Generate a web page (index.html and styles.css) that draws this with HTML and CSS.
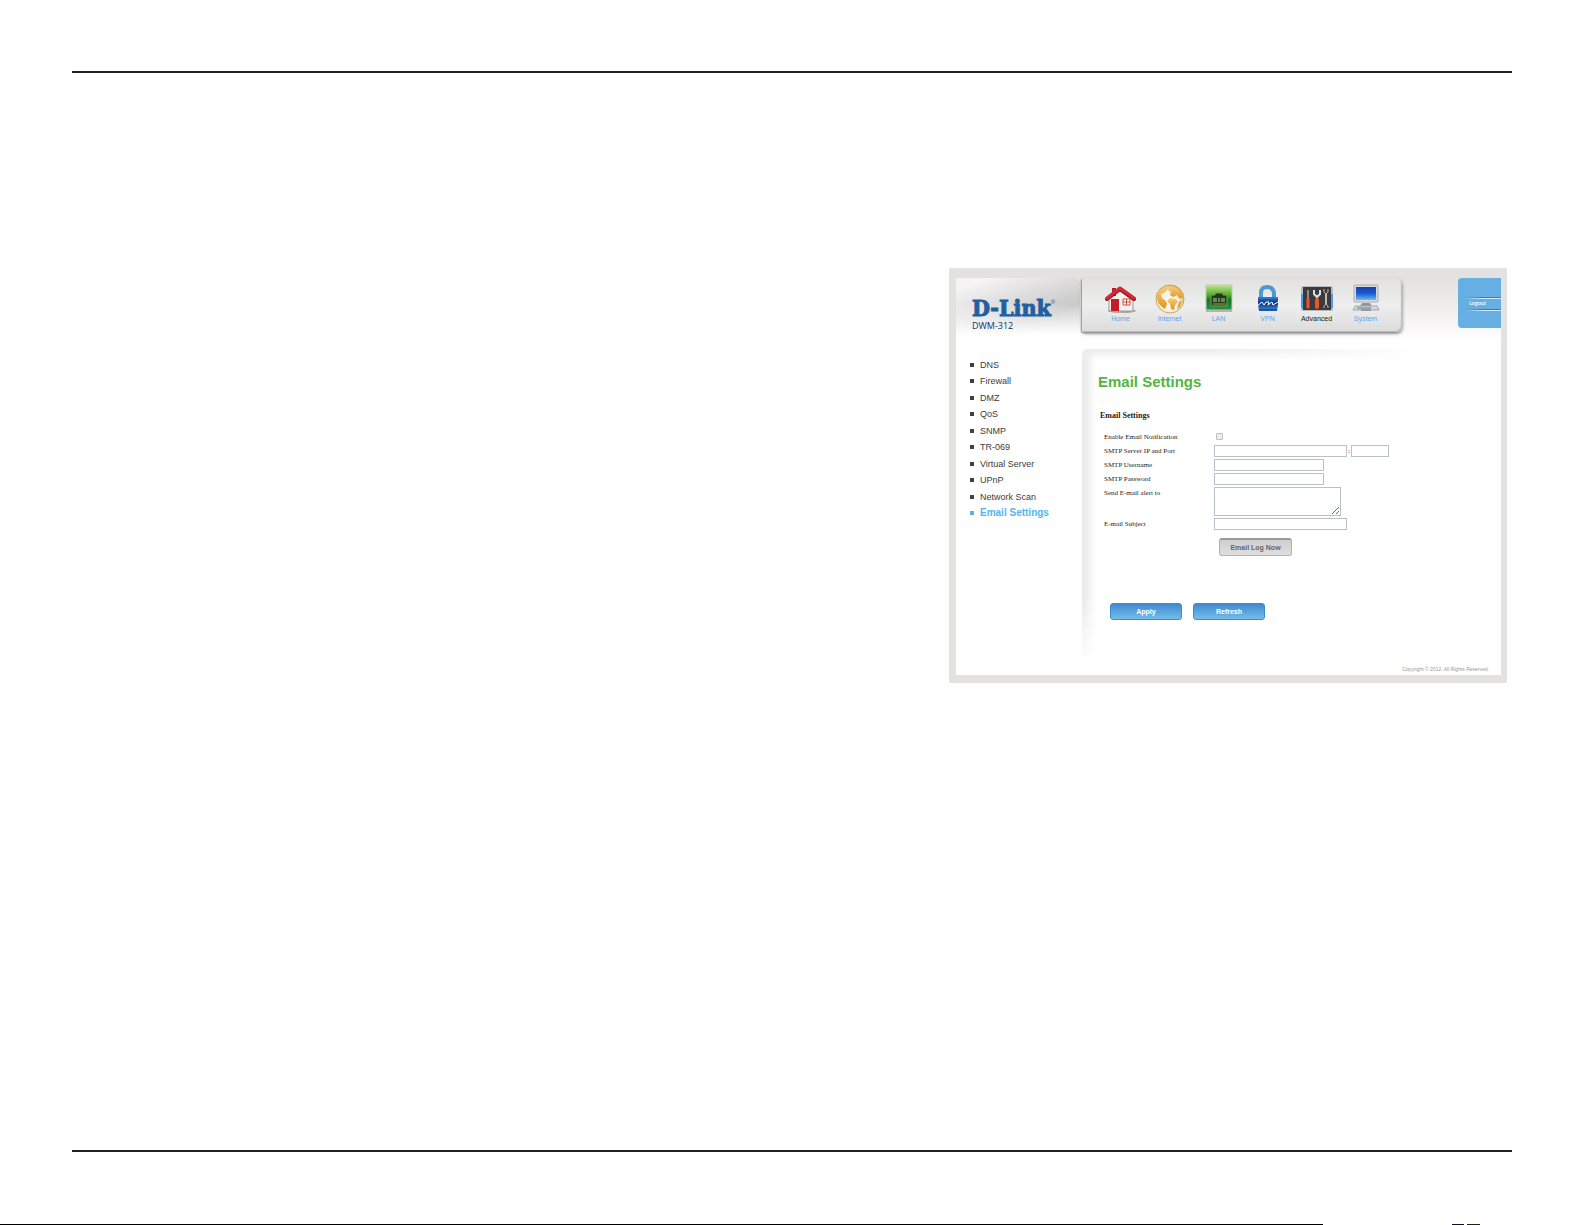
FILE: index.html
```html
<!DOCTYPE html>
<html lang="en">
<head>
  <meta charset="UTF-8">
  <meta name="viewport" content="width=device-width, initial-scale=1.0">
  <title>DWM-312 Email Settings</title>
  <link rel="stylesheet" href="styles.css">
</head>
<body>
  <main class="sheet">
    <hr class="rule">
    <div class="router">
      <header class="header">
        <div class="brand">
          <div class="logo">D-Link<sup>®</sup></div>
          <div class="model">DWM-312</div>
        </div>
        <nav class="topnav">
          <a href="#">
            <svg viewBox="0 0 32 30">
              <ellipse cx="17" cy="27" rx="14" ry="2" fill="#aaa"/>
              <path d="M4 14 16 5l12 9v13H4z" fill="#f3f1ef" stroke="#999"/>
              <path d="M7 4h4v8H7z" fill="#b51f28"/>
              <path d="M2 15 15 5l14 10" fill="none" stroke="#8f1a20" stroke-width="4" stroke-linejoin="round" stroke-linecap="round"/>
              <path d="M2 14 15 4l14 10" fill="none" stroke="#d62b35" stroke-width="3" stroke-linejoin="round" stroke-linecap="round"/>
              <path d="M6 15h8v12H6z" fill="#c51c27"/>
              <path d="M18 15h7v6h-7zM21.500 15v6M18 18h7" fill="#fff" stroke="#d0483c"/>
            </svg>
            Home
          </a>
          <a href="#">
            <svg viewBox="0 0 32 30">
              <defs>
                <linearGradient id="land" x2="0" y2="1"><stop offset="0" stop-color="#f6cf7c"/><stop offset="1" stop-color="#e2951c"/></linearGradient>
                <radialGradient id="sea" cx=".45" cy=".6" r=".6"><stop offset="0" stop-color="#fff"/><stop offset=".7" stop-color="#efeae0"/><stop offset="1" stop-color="#d9a852"/></radialGradient>
              </defs>
              <circle cx="16" cy="15" r="14" fill="url(#sea)" stroke="#cfa65c"/>
              <path d="M4 8Q9 2 15 2l-1 3-4 4-3 1 1 4 4 3 1 3-2 5Q2 20 3 11z" fill="url(#land)"/>
              <path d="M16 2q10 1 13 11l-3 2-3-4-4 2-3-2 1-3-3-2z" fill="url(#land)"/>
              <path d="M16 14l6 1 2 3-3 3-1 5-3-1-1-5-3-3z" fill="url(#land)"/>
              <path d="M25 18l3-2-2 7-3 2z" fill="#e9a02a"/>
            </svg>
            Internet
          </a>
          <a href="#">
            <svg viewBox="0 0 32 30">
              <defs>
                <linearGradient id="lan" x2="0" y2="1"><stop offset="0" stop-color="#c4e58f"/><stop offset=".4" stop-color="#4dae28"/><stop offset=".6" stop-color="#14742a"/><stop offset="1" stop-color="#24964a"/></linearGradient>
              </defs>
              <path d="M3 1h26v25H3z" fill="url(#lan)" stroke="#b9cfae"/>
              <path d="M3 26h26v2H3z" fill="#b8b4a8"/>
              <path d="M8 11h4V9h8v2h4v11H8z" fill="#173e20" stroke="#8f9a4c"/>
              <path d="M11 14v4M13 14v4M16 14v4M19 14v4M21 14v4" stroke="#d0c873"/>
              <path d="M10 20h13" stroke="#b0a850"/>
            </svg>
            LAN
          </a>
          <a href="#">
            <svg viewBox="0 0 32 30">
              <path d="M9 14V9q0-6 6-6t7 6v5" fill="none" stroke="#4e98d4" stroke-width="4"/>
              <path d="M6 13h20v7l-1 7H7l-1-7z" fill="#1c56a8"/>
              <path d="M6 13h20v2H6z" fill="#2f75c8"/>
              <path d="M6 17h20v4H6z" fill="#173f86"/>
              <path d="M5 22l5-4 2 3 2-3h3l-1 3 4-3 1 3 5-3" fill="none" stroke="#fff"/>
              <path d="M7 24h18" stroke="#3c88d2"/>
            </svg>
            VPN
          </a>
          <a href="#" class="current">
            <svg viewBox="0 0 32 30">
              <rect y="2" width="32" height="25" rx="2" fill="#b7bcc1"/>
              <path d="M1 10v14M31 10v14" stroke="#4aa0e4" stroke-width="2"/>
              <rect x="2" y="3" width="28" height="23" fill="#3c3b3c"/>
              <path d="M7 6v8" stroke="#ddd" stroke-width="1"/>
              <path d="M7 15v8" stroke="#ee542c" stroke-width="3" stroke-linecap="round"/>
              <path d="M13 6v4l3 3 3-3V6M16 12v3" fill="none" stroke="#d9dfe2" stroke-width="2"/>
              <path d="M16 16v7" stroke="#ee542c" stroke-width="4" stroke-linecap="round"/>
              <path d="M25 9v12" stroke="#bcb9b6" stroke-width="2"/>
              <path d="M23 5v3l2 2 2-2V5M23 24v-2l2-2 2 2v2" fill="none" stroke="#bcb9b6"/>
            </svg>
            Advanced
          </a>
          <a href="#">
            <svg viewBox="0 0 32 30">
              <defs>
                <linearGradient id="screen" x2="0" y2="1"><stop offset="0" stop-color="#1741ae"/><stop offset=".5" stop-color="#1c5bd0"/><stop offset="1" stop-color="#64b9ef"/></linearGradient>
              </defs>
              <rect x="4" y="1" width="24" height="17" rx="1" fill="#d6dade" stroke="#a9adb1"/>
              <path d="M6 3h20v13H6z" fill="url(#screen)"/>
              <path d="M12 19h8l2 3H10z" fill="#8c969e"/>
              <path d="M5 22h22l2 4H3z" fill="#d5d8da" stroke="#a2a7aa"/>
              <path d="M7 24h14M11 26h10" stroke="#69747c"/>
            </svg>
            System
          </a>
        </nav>
        <div class="session">
          <button type="button" class="logout">Logout</button>
        </div>
      </header>

      <div class="columns">
        <ul class="sidebar">
          <li><a href="#">DNS</a></li>
          <li><a href="#">Firewall</a></li>
          <li><a href="#">DMZ</a></li>
          <li><a href="#">QoS</a></li>
          <li><a href="#">SNMP</a></li>
          <li><a href="#">TR-069</a></li>
          <li><a href="#">Virtual Server</a></li>
          <li><a href="#">UPnP</a></li>
          <li><a href="#">Network Scan</a></li>
          <li class="active"><a href="#">Email Settings</a></li>
        </ul>

        <section class="content">
          <h1>Email Settings</h1>
          <form class="form">
            <h2>Email Settings</h2>
            <div class="row">
              <label for="enable">Enable Email Notification</label>
              <input type="checkbox" id="enable">
            </div>
            <div class="row">
              <label for="server">SMTP Server IP and Port</label>
              <div class="pair">
                <input type="text" id="server" class="wide">
                <span>:</span>
                <input type="text" class="port" aria-label="Port">
              </div>
            </div>
            <div class="row">
              <label for="user">SMTP Username</label>
              <input type="text" id="user">
            </div>
            <div class="row">
              <label for="pass">SMTP Password</label>
              <input type="password" id="pass">
            </div>
            <div class="row">
              <label for="alert">Send E-mail alert to</label>
              <textarea id="alert"></textarea>
            </div>
            <div class="row">
              <label for="subject">E-mail Subject</label>
              <input type="text" id="subject" class="wide">
            </div>
            <button type="button" class="log">Email Log Now</button>
            <div class="actions">
              <button type="button">Apply</button>
              <button type="button">Refresh</button>
            </div>
          </form>
        </section>
      </div>
      <footer class="copyright">Copyright © 2012. All Rights Reserved.</footer>
    </div>
    <hr class="rule bottom">
  </main>
  <div class="edge"></div>
</body>
</html>
```
FILE: styles.css
```css
* {
  box-sizing: border-box;
}
body {
  margin: 0;
  min-height: 100vh;
  display: flex;
  flex-direction: column;
  background: #fff;
  color: #222;
  font-family: "Liberation Sans", Arial, sans-serif;
}
a {
  text-decoration: none;
}
.sheet {
  flex: 1;
  display: flex;
  flex-direction: column;
  padding: 71px 73px 72px 72px;
}
.rule {
  width: 100%;
  height: 2px;
  margin: 0;
  border: 0;
  background: #231f20;
}
.rule.bottom {
  margin-top: auto;
}
.edge {
  height: 1px;
  background:
    linear-gradient(#112, #112) 1452px 0 / 12px 1px no-repeat,
    linear-gradient(#221, #221) 1467px 0 / 13px 1px no-repeat,
    linear-gradient(#000, #000) 0 0 / 1323px 1px no-repeat;
}

/* router window */
.router {
  width: 38%;
  min-width: 558px;
  margin: 195px 5px 40px auto;
  padding: 10px 6px 8px 7px;
  background: linear-gradient(#fff, #fff) content-box, #e3e2e0;
}
.header {
  display: flex;
  align-items: flex-start;
  height: 71px;
  background: linear-gradient(#e3e2e0, #f2f1f0 50%, #fff 90%);
}
.brand {
  width: 124px;
  height: 71px;
  padding: 18px 0 0 16px;
  border-top-right-radius: 6px;
  background:
    linear-gradient(transparent 35%, #fff 80%),
    linear-gradient(160deg, #f4f4f4 10%, #dadada 40%, #c8c8c8 60%, #d8d8d8);
}
.logo {
  display: flex;
  font: bold 23px/24px "DejaVu Serif Condensed", "DejaVu Serif", serif;
  color: #2160a0;
  -webkit-text-stroke: 1px #2160a0;
}
.logo sup {
  font: 6px/8px "Liberation Sans", sans-serif;
  -webkit-text-stroke: 0;
  margin-top: 2px;
}
.model {
  font: 9px/12px "Open Sans", sans-serif;
  color: #10306a;
}
.topnav {
  display: flex;
  width: 320px;
  height: 54px;
  margin-left: 2px;
  padding: 6px 12px 0 14px;
  border-radius: 2px 6px 6px 2px;
  background: linear-gradient(#e2e1df, #eee 50%, #dcdcdc);
  box-shadow: inset -1px -1px 1px #bbb, -1px 1px 2px #888, 1px 2px 3px #aaa;
}
.topnav a {
  flex: 1;
  display: flex;
  flex-direction: column;
  align-items: center;
  gap: 1px;
  font-size: 7px;
  line-height: 8px;
  color: #5aa7e6;
}
.topnav svg {
  width: 32px;
  height: 30px;
}
.topnav .current {
  color: #222;
}
.session {
  margin-left: auto;
}
button {
  padding: 0;
  border: 0;
  font-family: inherit;
  cursor: pointer;
}
.logout {
  display: block;
  width: 43px;
  height: 50px;
  padding-right: 4px;
  border-radius: 4px 0 0 4px;
  background:
    linear-gradient(90deg, transparent, #2f7fc0 50%) 6px 19px / 38px 1px no-repeat,
    linear-gradient(90deg, transparent, #d5ebfa 50%) 6px 20px / 38px 1px no-repeat,
    linear-gradient(90deg, transparent, #2f7fc0 50%) 6px 31px / 38px 1px no-repeat,
    linear-gradient(90deg, transparent, #d5ebfa 50%) 6px 32px / 38px 1px no-repeat,
    #66afe3;
  color: #fff;
  font: 600 5px/8px "Open Sans", sans-serif;
}

.columns {
  display: grid;
  grid-template-columns: 126px 1fr;
}
.sidebar {
  display: flex;
  flex-direction: column;
  justify-content: space-between;
  height: 164px;
  margin: 8px 0 0;
  padding: 0 0 0 14px;
  list-style: none;
  font-size: 9px;
  line-height: 16px;
}
.sidebar li {
  display: flex;
  align-items: center;
  gap: 6px;
}
.sidebar li::before {
  content: "";
  width: 4px;
  height: 4px;
  background: #3a4248;
}
.sidebar a {
  color: #3c3c3c;
}
.sidebar .active::before {
  background: #56b4e8;
}
.sidebar .active a {
  color: #56b4e8;
  font-size: 10px;
  font-weight: bold;
}

/* soft grey edge along the top and left of the content */
.content {
  padding: 24px 16px 43px;
  border-top-left-radius: 5px;
  background:
    linear-gradient(transparent 80%, #fff) 0 0 / 14px 100% no-repeat,
    linear-gradient(90deg, transparent 30%, #fff 82%) 0 0 / 100% 12px no-repeat,
    linear-gradient(90deg, #ececec 20%, transparent) 0 0 / 14px 100% no-repeat,
    linear-gradient(#ececec, #fff) 0 0 / 100% 12px no-repeat;
}
h1 {
  margin: 0 0 20px;
  font-size: 15px;
  line-height: 18px;
  color: #54b442;
}
.form {
  padding-left: 2px;
  font: 7px/14px "Liberation Serif", "Times New Roman", serif;
}
h2 {
  margin: 0 0 9px;
  font-size: 8px;
  line-height: 10px;
}
.row {
  display: grid;
  grid-template-columns: 110px 1fr;
  padding-left: 4px;
}
.pair {
  display: flex;
}
.pair span {
  width: 4px;
  text-align: center;
}
input,
textarea {
  display: block;
  width: 110px;
  height: 12px;
  margin: 1px 0;
  padding: 1px 2px;
  border: 1px solid #b5c3c9;
  background: #fff;
  font: 7px/8px "Liberation Sans", sans-serif;
}
input.wide {
  width: 133px;
}
input.port {
  width: 38px;
}
textarea {
  width: 127px;
  height: 29px;
}
input[type="checkbox"] {
  appearance: none;
  width: 7px;
  height: 7px;
  margin: 3px 2px 4px;
  padding: 0;
  border-radius: 1px;
  background: #eee;
}
input[type="checkbox"]:checked {
  background: #56b4e8;
}
.log {
  display: block;
  width: 73px;
  height: 18px;
  margin: 7px 0 0 119px;
  border: 1px solid #b2b2b2;
  border-top: 2px solid #999;
  border-radius: 3px;
  background: linear-gradient(#cfcfcf, #dedede);
  color: #666;
  font: bold 7px/14px "Liberation Sans", sans-serif;
}
.actions {
  display: flex;
  gap: 11px;
  margin-top: 47px;
  padding-left: 10px;
}
.actions button {
  width: 72px;
  height: 17px;
  border: 1px solid #3d8bd0;
  border-radius: 3px;
  background: linear-gradient(#3f8ad0, #73bdec);
  color: #fff;
  font: bold 7px/14px "Liberation Sans", sans-serif;
}
.copyright {
  padding-right: 12px;
  font-size: 5px;
  line-height: 12px;
  text-align: right;
  color: #999;
}
```
